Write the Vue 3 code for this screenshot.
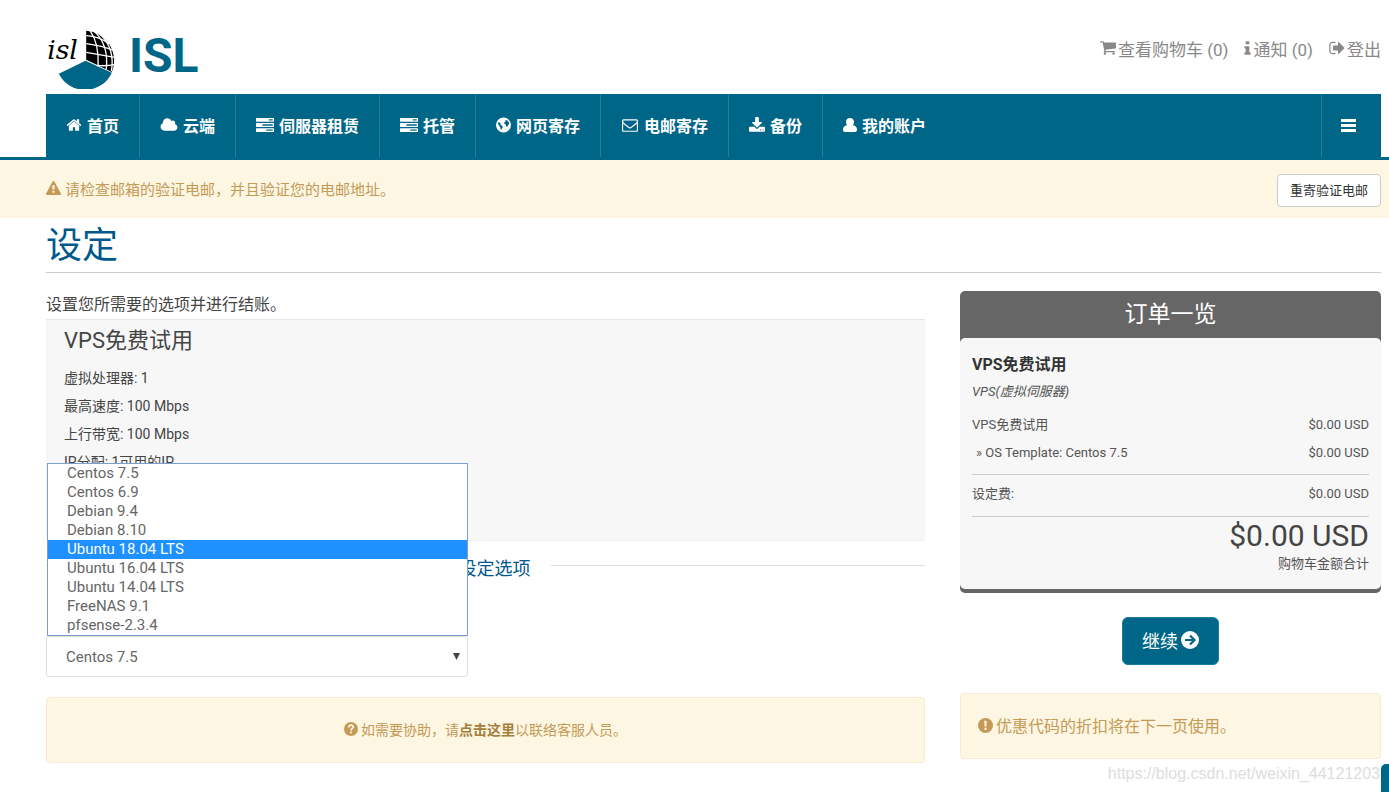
<script setup>
import { ref } from 'vue'

const icons = {
  home: { box: '64 0 1664 1792', w: 16, d: 'M1472 992v480q0 26-19 45t-45 19h-384v-384h-256v384h-384q-26 0-45-19t-19-45v-480q0-1 .5-3t.5-3l575-474 575 474q1 2 1 6zm223-69l-62 74q-8 9-21 11h-3q-13 0-21-7l-692-577-692 577q-12 8-24 7-13-2-21-11l-62-74q-8-10-7-23.5t11-21.5l719-599q32-26 76-26t76 26l244 204v-195q0-14 9-23t23-9h192q14 0 23 9t9 23v408l219 182q10 8 11 21.5t-7 23.5z' },
  cloud: { box: '0 0 2048 1792', w: 18, d: 'M1984 1152q0 159-112.5 271.5t-271.5 112.5h-1088q-185 0-316.5-131.5t-131.5-316.5q0-132 71-241.5t187-163.5q-2-28-2-43 0-212 150-362t362-150q158 0 286.5 88t187.5 230q70-62 166-62 106 0 181 75t75 181q0 75-41 138 129 30 213 134.5t84 239.5z' },
  tasks: { box: '0 64 1792 1536', w: 18, d: 'M1024 1408h640v-128h-640v128zm-384-512h1024v-128h-1024v128zm640-512h384v-128h-384v128zm512 832v256q0 26-19 45t-45 19h-1664q-26 0-45-19t-19-45v-256q0-26 19-45t45-19h1664q26 0 45 19t19 45zm0-512v256q0 26-19 45t-45 19h-1664q-26 0-45-19t-19-45v-256q0-26 19-45t45-19h1664q26 0 45 19t19 45zm0-512v256q0 26-19 45t-45 19h-1664q-26 0-45-19t-19-45v-256q0-26 19-45t45-19h1664q26 0 45 19t19 45z' },
  globe: { box: '0 0 16 16', w: 15, d: 'M8 0a8 8 0 1 0 0 16A8 8 0 0 0 8 0ZM9.800 2.600l2 .2 1.900 2.300.3 1.800-1 1.200-.6 1.200-1.200.5-.7-1-.2-1.500-1.300-.5-.3-1.200.8-1.200 1.100-.4-.8-1.400ZM2.200 5l1.500.2 1.300 1.300-.3 1.200 1.800 1.200.9 1.100-.8 1.400-.9 1.600-1-1-.2-1.900-1.400-1.700-.9-1.800Z' },
  mail: { box: '0 0 1792 1792', w: 18, d: 'M1664 1504v-768q-32 36-69 66-268 206-426 338-51 43-83 67t-86.5 48.5-102.5 24.5h-2q-48 0-102.5-24.5t-86.5-48.5-83-67q-158-132-426-338-37-30-69-66v768q0 13 9.5 22.5t22.5 9.5h1472q13 0 22.5-9.5t9.5-22.5zm0-1051v-24.5l-.5-13-3-12.5-5.5-9-9-7.5-14-2.5h-1472q-13 0-22.5 9.5t-9.5 22.5q0 168 147 284 193 152 401 317 6 5 35 29.5t46 37.5 44.5 31.5 50.5 27.5 43 9h2q20 0 43-9t50.5-27.5 44.5-31.5 46-37.5 35-29.5q208-165 401-317 54-43 100.5-115.5t46.5-131.5zm128-37v1088q0 66-47 113t-113 47h-1472q-66 0-113-47t-47-113v-1088q0-66 47-113t113-47h1472q66 0 113 47t47 113z' },
  download: { box: '64 0 1664 1664', w: 16, d: 'M1344 1344q0-26-19-45t-45-19-45 19-19 45 19 45 45 19 45-19 19-45zm256 0q0-26-19-45t-45-19-45 19-19 45 19 45 45 19 45-19 19-45zm128-224v320q0 40-28 68t-68 28h-1472q-40 0-68-28t-28-68v-320q0-40 28-68t68-28h465l135 136q58 56 136 56t136-56l136-136h464q40 0 68 28t28 68zm-325-569q17 41-14 70l-448 448q-18 19-45 19t-45-19l-448-448q-31-29-14-70 17-39 59-39h256v-448q0-26 19-45t45-19h256q26 0 45 19t19 45v448h256q42 0 59 39z' },
  user: { box: '0 0 14 16', w: 14, d: 'M7 1C9.300 1 11 2.700 11 4.800 11 6.200 10.600 7.300 9.900 8.200 12.800 8.400 14 10.300 14 12.800 14 14.200 13.200 15 12 15H2C.8 15 0 14.200 0 12.800 0 10.300 1.200 8.400 4.100 8.200 3.400 7.300 3 6.200 3 4.800 3 2.700 4.700 1 7 1Z' },
  cart: { box: '64 128 1664 1664', w: 16, d: 'M704 1536q0 52-38 90t-90 38-90-38-38-90 38-90 90-38 90 38 38 90zm896 0q0 52-38 90t-90 38-90-38-38-90 38-90 90-38 90 38 38 90zm128-1088v512q0 24-16.5 42.5t-40.5 21.5l-1044 122q13 60 13 70 0 16-24 64h920q26 0 45 19t19 45-19 45-45 19h-1024q-26 0-45-19t-19-45q0-11 8-31.5t16-36 21.5-40 15.5-29.5l-177-823h-204q-26 0-45-19t-19-45 19-45 45-19h256q16 0 28.5 6.5t19.5 15.5 13 24.5 8 26 5.5 29.5 4.5 26h1201q26 0 45 19t19 45z' },
  info: { box: '576 0 640 1664', w: 7, d: 'M1216 1344v128q0 26-19 45t-45 19h-512q-26 0-45-19t-19-45v-128q0-26 19-45t45-19h64v-384h-64q-26 0-45-19t-19-45v-128q0-26 19-45t45-19h384q26 0 45 19t19 45v576h64q26 0 45 19t19 45zm-128-1152v192q0 26-19 45t-45 19h-256q-26 0-45-19t-19-45v-192q0-26 19-45t45-19h256q26 0 45 19t19 45z' },
  signout: { box: '64 64 1600 1664', w: 16, d: 'M704 1440q0 4 1 20t.5 26.5-3 23.5-10 19.5-20.5 6.5h-320q-119 0-203.5-84.5t-84.5-203.5v-704q0-119 84.5-203.5t203.5-84.5h320q13 0 22.5 9.5t9.5 22.5q0 4 1 20t.5 26.5-3 23.5-10 19.5-20.5 6.5h-320q-66 0-113 47t-47 113v704q0 66 47 113t113 47h312l11.5 1 11.5 3 8 5.5 7 9 2 13.5zm928-544q0 26-19 45l-544 544q-19 19-45 19t-45-19-19-45v-288h-448q-26 0-45-19t-19-45v-384q0-26 19-45t45-19h448v-288q0-26 19-45t45-19 45 19l544 544q19 19 19 45z' },
}

const nav = [
  { icon: 'home', text: '首页' },
  { icon: 'cloud', text: '云端' },
  { icon: 'tasks', text: '伺服器租赁' },
  { icon: 'tasks', text: '托管' },
  { icon: 'globe', text: '网页寄存' },
  { icon: 'mail', text: '电邮寄存' },
  { icon: 'download', text: '备份' },
  { icon: 'user', text: '我的账户' },
]

const account = [
  { icon: 'cart', text: '查看购物车 (0)' },
  { icon: 'info', text: '通知 (0)' },
  { icon: 'signout', text: '登出' },
]

const specs = ['虚拟处理器: 1', '最高速度: 100 Mbps', '上行带宽: 100 Mbps', 'IP分配: 1可用的IP']

const templates = [
  'Centos 7.5', 'Centos 6.9', 'Debian 9.4', 'Debian 8.10', 'Ubuntu 18.04 LTS',
  'Ubuntu 16.04 LTS', 'Ubuntu 14.04 LTS', 'FreeNAS 9.1', 'pfsense-2.3.4',
]
const selected = ref('Centos 7.5')
const hovered = ref('Ubuntu 18.04 LTS')
</script>

<template>
  <div class="page">
    <header class="top">
      <a class="brand" href="#">
        <svg class="logo" viewBox="48 42 210 180" aria-hidden="true">
          <path d="M165 137 244 173A88 88 0 0 1 85 176Z" fill="#006687" />
          <path d="M167 47A90 90 0 0 1 244 171L167 134Z" fill="#000" />
          <g fill="none" stroke="#fff" stroke-width="4">
            <path d="M167 62Q204 64 236 86" />
            <path d="M167 86Q214 92 254 108" />
            <path d="M167 112Q212 120 257 128" />
            <path d="M198 151Q226 154 252 149" />
            <path d="M178 46Q206 84 203 153" />
            <path d="M190 48Q236 88 227 164" />
            <path d="M206 55Q254 98 243 168" />
          </g>
          <text class="script" x="50" y="131">isl</text>
        </svg>
        <span>ISL</span>
      </a>
      <div class="account">
        <a v-for="a in account" :key="a.text" href="#">
          <svg :viewBox="icons[a.icon].box" :width="icons[a.icon].w" height="16" aria-hidden="true"><path :d="icons[a.icon].d" /></svg>
          <span>{{ a.text }}</span>
        </a>
      </div>
    </header>

    <div class="navband">
      <nav class="nav">
        <a v-for="n in nav" :key="n.text" href="#">
          <svg :viewBox="icons[n.icon].box" :width="icons[n.icon].w" height="16" aria-hidden="true"><path fill-rule="evenodd" :d="icons[n.icon].d" /></svg>
          <span>{{ n.text }}</span>
        </a>
        <button class="menu" type="button" aria-label="菜单">
          <svg viewBox="0 0 15 13" width="15" height="13" aria-hidden="true"><path d="M0 0h15v3H0zM0 5h15v3H0zM0 10h15v3H0z" /></svg>
        </button>
      </nav>
    </div>

    <div class="verify">
      <p>
        <svg viewBox="0 0 1792 1664" width="15" height="14" aria-hidden="true"><path d="M1024 1375v-190q0-14-9.5-23.5t-22.5-9.5h-192q-13 0-22.5 9.5t-9.5 23.5v190q0 14 9.5 23.5t22.5 9.5h192q13 0 22.5-9.5t9.5-23.5zm-2-374l18-459q0-12-10-19-13-11-24-11h-220q-11 0-24 11-10 7-10 21l17 457q0 10 10 16.5t24 6.5h185q14 0 23.5-6.5t10.5-16.5zm-14-934l768 1408q35 63-2 126-17 29-46.5 46t-63.5 17h-1536q-34 0-63.5-17t-46.5-46q-37-63-2-126l768-1408q17-31 47-49t65-18 65 18 47 49z" /></svg>
        <span>请检查邮箱的验证电邮，并且验证您的电邮地址。</span>
      </p>
      <button type="button">重寄验证电邮</button>
    </div>

    <main>
      <h1>设定</h1>
      <div class="columns">
        <section>
          <p class="intro">设置您所需要的选项并进行结账。</p>
          <div class="product">
            <h2>VPS免费试用</h2>
            <p v-for="s in specs" :key="s">{{ s }}</p>
          </div>
          <h3 class="divider"><span>可设定选项</span></h3>
          <div class="picker">
            <select v-model="selected" aria-label="OS Template">
              <option v-for="t in templates" :key="t">{{ t }}</option>
            </select>
            <svg class="caret" viewBox="0 0 7 7" width="7" height="7" aria-hidden="true"><path d="M0 0h7L3.500 7z" /></svg>
            <ul role="listbox" aria-label="OS Template">
              <li v-for="t in templates" :key="t" role="option" :aria-selected="t === selected" :class="{ active: t === hovered }" @mouseenter="hovered = t">{{ t }}</li>
            </ul>
          </div>
          <div class="notice help">
            <svg viewBox="0 0 16 16" width="14" height="14" aria-hidden="true">
              <circle cx="8" cy="8" r="8" />
              <path d="M5.4 6.1C5.6 4.4 6.6 3.7 8 3.7c1.5 0 2.6.9 2.6 2.1C10.600 7.500 8 7.500 8 9.600" fill="none" stroke="#fdf6e2" stroke-width="2" />
              <path d="M7 10.800h2v2H7z" fill="#fdf6e2" />
            </svg>
            <p>如需要协助，请<a href="#">点击这里</a>以联络客服人员。</p>
          </div>
        </section>

        <aside>
          <div class="order">
            <h2>订单一览</h2>
            <div class="summary">
              <strong>VPS免费试用</strong>
              <em>VPS(虚拟伺服器)</em>
              <div class="lines">
                <div class="row"><span>VPS免费试用</span><span>$0.00 USD</span></div>
                <div class="row"><span class="sub">» OS Template: Centos 7.5</span><span>$0.00 USD</span></div>
              </div>
              <div class="fees">
                <div class="row"><span>设定费:</span><span>$0.00 USD</span></div>
              </div>
              <div class="total">
                <span class="amount">$0.00 USD</span>
                <span class="caption">购物车金额合计</span>
              </div>
            </div>
          </div>
          <button class="continue" type="button">
            <span>继续</span>
            <svg viewBox="0 0 18 18" width="18" height="18" aria-hidden="true">
              <circle cx="9" cy="9" r="9" fill="#fff" />
              <path d="M4 9h9M9 4.500 13.500 9 9 13.500" fill="none" stroke="#006687" stroke-width="2.200" />
            </svg>
          </button>
          <div class="notice promo">
            <svg viewBox="0 0 16 16" width="15" height="15" aria-hidden="true">
              <circle cx="8" cy="8" r="8" />
              <path d="M6.700 3h2.600l-.4 6.200H7.100zM6.800 10.500h2.400v2.300H6.800z" fill="#fdf6e2" />
            </svg>
            <p>优惠代码的折扣将在下一页使用。</p>
          </div>
        </aside>
      </div>
    </main>
    <span class="watermark">https://blog.csdn.net/weixin_44121203</span>
    <span class="chat"></span>
  </div>
</template>

<style>
body {
  margin: 0;
  background: #fff;
}
</style>

<style scoped>
.page {
  position: relative;
  min-height: 100vh;
  overflow: hidden;
  box-sizing: border-box;
  font-family: Roboto, "Noto Sans CJK SC", sans-serif;
  font-size: 14px;
  color: #555;
}
.page * {
  box-sizing: border-box;
}
p, h1, h2, h3, ul {
  margin: 0;
  padding: 0;
  font-weight: 400;
}
a {
  color: inherit;
  text-decoration: none;
}
button, select {
  font-family: inherit;
}
svg {
  flex: none;
  fill: currentColor;
}

.top {
  display: flex;
  justify-content: space-between;
  height: 94px;
  padding: 0 8px 0 46px;
}
.brand {
  display: flex;
  align-items: center;
  gap: 12px;
  padding-top: 24px;
  color: #006687;
  font-size: 48px;
  font-weight: 700;
}
.brand span {
  padding-bottom: 6px;
  line-height: 56px;
}
.logo {
  width: 71px;
  height: 60px;
}
.script {
  fill: #000;
  font: italic 400 80px "DejaVu Serif", serif;
}
.account {
  display: flex;
  gap: 16px;
  height: 96px;
  align-items: center;
  color: #888;
  font-size: 17px;
}
.account a {
  display: flex;
  align-items: center;
  gap: 2px;
}

.navband {
  padding: 0 8px 0 46px;
  border-bottom: 3px solid #006687;
}
.nav {
  display: flex;
  height: 63px;
  background: #006687;
  color: #fff;
  font-size: 16px;
  font-weight: 700;
}
.nav a {
  display: flex;
  align-items: center;
  gap: 5px;
  padding: 0 20px 2px;
  border-right: 1px solid #23809b;
}
.nav a:last-of-type {
  border-right: 0;
}
.menu {
  display: flex;
  align-items: center;
  justify-content: center;
  width: 60px;
  margin-left: auto;
  padding: 0 6px 0 0;
  border: 0;
  border-left: 1px solid #23809b;
  background: none;
  color: #fff;
}

.verify {
  display: flex;
  align-items: center;
  justify-content: space-between;
  height: 58px;
  padding: 0 8px 0 46px;
  background: #fdf6e2;
  color: #c49a56;
  font-size: 15px;
}
.verify p {
  display: flex;
  align-items: center;
  gap: 4px;
  padding-bottom: 2px;
}
.verify button {
  height: 33px;
  margin-top: 2px;
  padding: 0 12px 2px;
  border: 1px solid #ccc;
  border-radius: 4px;
  background: #fff;
  color: #333;
  font-size: 13px;
}

main {
  padding: 0 8px 0 46px;
}
h1 {
  height: 55px;
  border-bottom: 1px solid #ccc;
  color: #00588c;
  font-size: 36px;
  line-height: 56px;
}
.columns {
  display: grid;
  grid-template-columns: 879fr 421fr;
  gap: 35px;
  align-items: start;
  padding-top: 18px;
}
.intro {
  color: #444;
  font-size: 16px;
  line-height: 28px;
}
.product {
  min-height: 222px;
  padding: 6px 18px;
  border-top: 1px solid #e6e6e6;
  border-bottom: 1px solid #eee;
  background: #f7f7f7;
  color: #444;
  line-height: 28px;
}
.product h2 {
  margin-bottom: 8px;
  font-size: 22px;
  line-height: 30px;
}
.divider {
  display: flex;
  align-items: center;
  gap: 20px;
  height: 26px;
  margin-top: 11px;
  color: #00588c;
  font-size: 18px;
}
.divider span {
  padding-top: 4px;
}
.divider::before, .divider::after {
  content: "";
  flex: 1;
  height: 1px;
  background: #ddd;
}
.picker {
  position: relative;
  width: 48%;
  margin-top: 58px;
}
.picker select {
  display: block;
  width: 100%;
  height: 41px;
  padding: 0 19px;
  border: 1px solid #ddd;
  border-radius: 3px;
  appearance: none;
  background: #fff;
  color: #666;
  font-size: 15px;
}
.caret {
  position: absolute;
  top: 17px;
  right: 8px;
  color: #444;
  pointer-events: none;
}
.picker ul {
  position: absolute;
  bottom: 100%;
  left: 1px;
  right: 0;
  border: 1px solid #7b9fd0;
  background: #fff;
  color: #666;
  font-size: 15px;
  line-height: 19px;
  list-style: none;
}
.picker li {
  padding-left: 19px;
}
.picker .active {
  background: #1e90ff;
  color: #fff;
}
.notice {
  display: flex;
  align-items: center;
  gap: 3px;
  height: 66px;
  padding-bottom: 2px;
  border: 1px solid #faebcc;
  border-radius: 4px;
  background: #fdf6e2;
  color: #c49a56;
}
.help {
  justify-content: center;
  margin-top: 20px;
}
.help a {
  color: #a47e3c;
  font-weight: 700;
}

.order {
  padding-bottom: 4px;
  border-radius: 5px;
  background: #666;
}
.order h2 {
  color: #fff;
  font-size: 23px;
  line-height: 47px;
  text-align: center;
}
.summary {
  padding: 13px 12px 15px;
  border-radius: 5px;
  background: #f7f7f7;
  font-size: 13px;
}
.summary strong {
  display: block;
  color: #333;
  font-size: 16px;
  line-height: 28px;
}
.summary em {
  display: block;
  line-height: 26px;
}
.lines {
  padding: 6px 0 7px;
}
.row {
  display: flex;
  justify-content: space-between;
  line-height: 28px;
}
.sub {
  padding-left: 4px;
}
.fees {
  padding: 5px 0 8px;
  border-top: 1px solid #ccc;
  border-bottom: 1px solid #ccc;
}
.total {
  display: flex;
  flex-direction: column;
  align-items: flex-end;
}
.amount {
  color: #444;
  font-size: 30px;
  line-height: 37px;
}
.caption {
  line-height: 20px;
}
.continue {
  display: flex;
  align-items: center;
  gap: 3px;
  height: 48px;
  margin: 24px auto 28px;
  padding: 0 19px 2px;
  border: 1px solid #1a7ba0;
  border-radius: 6px;
  background: #006687;
  color: #fff;
  font-size: 18px;
}
.promo {
  padding-left: 17px;
  font-size: 16px;
}
.watermark {
  position: absolute;
  right: 9px;
  bottom: 9px;
  color: #ddd;
  font: 16px/18px "Liberation Sans", sans-serif;
}
.chat {
  position: absolute;
  right: 0;
  bottom: 0;
  width: 8px;
  height: 28px;
  border-radius: 5px 0 0;
  background: #006687;
}
</style>
